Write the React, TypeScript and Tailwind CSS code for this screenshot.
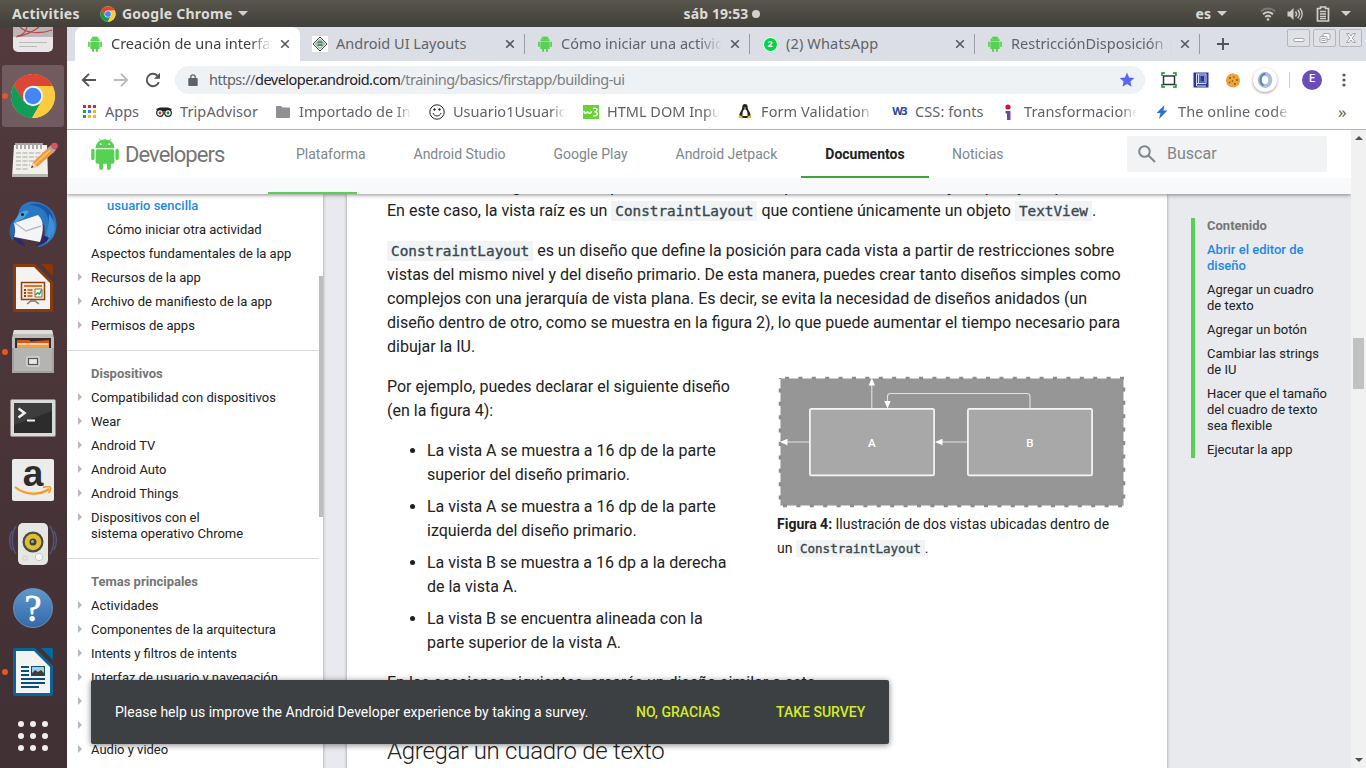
import React from "react";

const UI = "font-['Noto_Sans','Open_Sans',sans-serif]";

function Robot({ className }: { className: string }) {
  return (
    <svg viewBox="0 0 28 32" className={className} fill="#57d053">
      <path d="M4.600 10.200a9.400 9 0 0 1 18.800 0z" />
      <path d="M8.200.6l2 3.400M19.800.6l-2 3.400" stroke="#57d053" strokeWidth="0.9" />
      <rect x="4.600" y="11.200" width="18.800" height="14.600" rx="1.800" />
      <rect x="0.200" y="10.800" width="3.400" height="11.400" rx="1.700" />
      <rect x="24.400" y="10.800" width="3.400" height="11.400" rx="1.700" />
      <rect x="8.200" y="22" width="3.900" height="10" rx="1.900" />
      <rect x="15.900" y="22" width="3.900" height="10" rx="1.900" />
      <circle cx="9.700" cy="6.200" r="0.900" fill="#fff" />
      <circle cx="18.300" cy="6.200" r="0.900" fill="#fff" />
    </svg>
  );
}

function ChromeLogo({ className }: { className: string }) {
  return (
    <svg viewBox="0 0 48 48" className={className}>
      <circle cx="24" cy="24" r="23" fill="#fdcc3e" />
      <path d="M4.100 12.500A23 23 0 0 1 44.300 13.500H24L13.500 29z" fill="#dd4537" />
      <path d="M4.100 12.500A23 23 0 0 0 23 47l10.500-18.500-9.500 4-10-3.500z" fill="#119d58" />
      <path d="M23 47l10-17.500 1-16h10.300A23 23 0 0 1 23 47z" fill="#fdcc3e" />
      <circle cx="24" cy="24" r="10.600" fill="#f4f4f4" />
      <circle cx="24" cy="24" r="8.600" fill="#4486f5" />
    </svg>
  );
}

function CloseX() {
  return (
    <svg viewBox="0 0 16 16" className="size-4 shrink-0" stroke="#55595e" strokeWidth="1.600">
      <path d="M4.200 4.200l7.600 7.600M11.800 4.200l-7.600 7.600" />
    </svg>
  );
}

function Caret() {
  return <svg viewBox="0 0 10 5" className="h-[5px] w-[10px]" fill="#d2d0cb"><path d="M0 0h10L5 5z" /></svg>;
}

/* ---------- GNOME top bar ---------- */
function TopBar() {
  return (
    <div className={`grid h-[27px] shrink-0 grid-cols-3 items-center bg-linear-to-b from-[#59564d] to-[#403f39] text-[14px] font-bold text-[#dedbd5] ${UI}`}>
      <div className="flex items-center pl-3">
        <span className="w-[88px] tracking-[0.28px]">Activities</span>
        <ChromeLogo className="size-4" />
        <span className="ml-1.5 w-[116px] whitespace-nowrap tracking-[0.23px]">Google Chrome</span>
        <Caret />
      </div>
      <div className="flex items-center justify-center gap-1 pl-[78px]">
        <span className="tracking-[0.1px]">sáb 19:53</span>
        <span className="size-2 rounded-full bg-[#d2d0cb]" />
      </div>
      <div className="flex items-center justify-end pr-[15px]">
        <span className="mr-1.5">es</span>
        <Caret />
        <svg viewBox="0 0 16 16" className="ml-[33px] size-4" fill="none" stroke="#cfcdc8" strokeWidth="1.900">
          <path d="M1 5.300C5 1.500 11 1.500 15 5.300" stroke="#7b7973" />
          <path d="M3 8.300C6 5.500 10 5.500 13 8.300" />
          <path d="M5.300 11C7 9.500 9 9.500 10.700 11" />
          <circle cx="8" cy="13.500" r="1.300" fill="#cfcdc8" stroke="none" />
        </svg>
        <svg viewBox="0 0 16 16" className="ml-[11px] size-4" fill="none" stroke="#cfcdc8" strokeWidth="1.300">
          <path d="M.5 5.500h2.500L6.500 2v12L3 10.500H.5z" fill="#cfcdc8" stroke="none" />
          <path d="M8.500 5.500c1.300 1.500 1.300 3.500 0 5M10.700 3.800c2.200 2.500 2.200 5.900 0 8.400M12.800 2.200c3.200 3.400 3.200 8.200 0 11.600" />
        </svg>
        <svg viewBox="0 0 14 16" className="ml-[13px] h-4 w-[14px]" fill="none" stroke="#d2d0cb">
          <path d="M4.500 2.500V1h5v1.500H12.500v12.500h-11V2.500z" strokeWidth="1.700" />
          <path d="M4 5.500h6M4 8h6M4 10.500h6M4 12.700h6" strokeWidth="1.300" />
        </svg>
        <span className="ml-[11px]"><Caret /></span>
      </div>
    </div>
  );
}

/* ---------- Dock ---------- */
function Slot({ children, running, active }: { children: React.ReactNode; running?: boolean; active?: boolean }) {
  return (
    <div className="relative flex h-16 shrink-0 items-center justify-center pr-px">
      {active && <div className="absolute inset-y-px left-0.5 w-[62px] rounded-[3px] bg-white/18" />}
      {running && <div className="absolute left-0.5 top-[29px] size-[6px] rounded-full bg-[#e95420]" />}
      <div className="relative">{children}</div>
    </div>
  );
}

function Dock() {
  return (
    <div className="flex w-[67px] shrink-0 flex-col overflow-hidden bg-linear-to-b from-[#523a3d] via-[#4a3539] to-[#403033]">
      <div className="flex h-[37px] shrink-0 justify-center pr-px">
        <svg viewBox="0 0 42 26" className="h-[26px] w-[42px]">
          <path d="M1 0h40v20a5 5 0 0 1-5 5H6a5 5 0 0 1-5-5z" fill="#e8e6e6" />
          <path d="M1 0h40v10H1z" fill="#bcb6b7" />
          <path d="M4 10C14 8 22 4 27 0M8 0c5 5 18 8 32 3M15 0c-1 5-5 9-10 9" fill="none" stroke="#b9474b" strokeWidth="1.200" />
          <path d="M7 15.500h28M7 19.500h18" stroke="#bdbaba" />
        </svg>
      </div>
      <Slot running active><ChromeLogo className="size-[46px]" /></Slot>
      <Slot>
        <svg viewBox="0 0 46 38" className="ml-1 h-[38px] w-[46px]">
          <path d="M2 4h33l1 32H0z" fill="#f1f0ea" />
          <path d="M0 33h36v3H0z" fill="#b8b7b0" />
          <path d="M5 2v6M9 2v6M13 2v6M17 2v6M21 2v6M25 2v6M29 2v6" stroke="#fff" strokeWidth="3" />
          <path d="M5 2v6M9 2v6M13 2v6M17 2v6M21 2v6M25 2v6M29 2v6" stroke="#5a5753" strokeWidth="1" />
          <path d="M4 12h27M4 16h22M4 20h20M4 24h14M4 28h12" stroke="#aaa9a4" strokeDasharray="5 1.500" />
          <path d="M19 27l2-6L37 6l5 5-17 15z" fill="#f19a36" />
          <path d="M23 23L39 8.500" stroke="#fbc67d" strokeWidth="1.500" />
          <path d="M19 27l2-6 4 5z" fill="#f4d7a6" /><path d="M19 27l1-2.500 1.500 1.500z" fill="#222" />
          <path d="M36 7l3-3 5 5-3 3z" fill="#a9a9ae" />
          <circle cx="42.500" cy="5" r="3.300" fill="#e05359" />
        </svg>
      </Slot>
      <Slot>
        <svg viewBox="0 0 48 48" className="size-12">
          <path d="M17 3C24-1 38 3 44 12c5 9 5 20-2 28-4 4-9 7-14 7 7-5 9-12 7-22-8-6-15-6-26-4C9 12 10 6 17 3z" fill="#2b77c0" />
          <path d="M20 5c10 0 17 5 19 13 2 10-2 18-6 25 8-6 13-18 11-26C42 8 31 1 20 5z" fill="#1c56a4" />
          <path d="M40 14c7 8 7 18 2 26l2-8-6 12 1-9-7 11c6-11 8-20 8-32z" fill="#3b90d6" />
          <path d="M9 17C0 22-2 33 4 41c1-4 1-7 3-10z" fill="#2866ac" />
          <path d="M4 36c1 5 6 9 13 10L8 34z" fill="#31286f" />
          <path d="M34 35c-1 6-4 9-8 11 6 0 12-4 14-8z" fill="#2c2570" />
          <path d="M5 23l24-8c6 5 6 16 2 27L5 37c2-6 1-9 0-14z" fill="#f3f4f7" />
          <path d="M6 23l11 8 15-5" fill="none" stroke="#b8bcc6" strokeWidth="1.500" />
          <path d="M8 17c2-4 7-8 12-6l-5 7-11 6z" fill="#4ba2e0" />
          <circle cx="13.500" cy="14.500" r="1.500" fill="#222" />
        </svg>
      </Slot>
      <Slot>
        <svg viewBox="0 0 40 48" className="h-12 w-10">
          <path d="M0 2a2 2 0 0 1 2-2h20l18 18v28a2 2 0 0 1-2 2H2a2 2 0 0 1-2-2z" fill="#8c3a0b" />
          <path d="M28 0h10a2 2 0 0 1 2 2v10z" fill="#8f3604" />
          <path d="M3 3h18l16 16v26H3z" fill="#f3f3f1" />
          <rect x="8.500" y="18.500" width="23" height="17" fill="#fde8d8" stroke="#97400f" strokeWidth="1.500" />
          <path d="M11 22h18M14.500 26h5M14.500 29h5M14.500 32h5" stroke="#d2763a" strokeWidth="2" />
          <path d="M11 26h2M11 29h2M11 32h2" stroke="#97400f" strokeWidth="2" />
          <path d="M22 25h7v8h-7z" fill="#fff" stroke="#5a7b4f" /><path d="M22.500 31l2-2 2 1 2-4" stroke="#3c9d40" strokeWidth="1.500" fill="none" />
          <path d="M14 40l4-3h4l4 3" fill="none" stroke="#777" strokeWidth="1.500" />
        </svg>
      </Slot>
      <Slot running>
        <svg viewBox="0 0 42 44" className="h-11 w-[42px]">
          <path d="M2 0h38l2 8v34H0V8z" fill="#bdbdbb" />
          <path d="M2 0h38l1 4H1z" fill="#dcdcda" />
          <path d="M3 8h36v10H3z" fill="#332c2a" />
          <path d="M5 10h12l2 1.500 18-1.500V18H5z" fill="#d9531e" />
          <path d="M5 13h32v5H5z" fill="#f0a044" /><path d="M6 14h30" stroke="#fbe5b3" strokeWidth="1.500" />
          <path d="M0 18h42v25H0z" fill="#a2a2a0" /><path d="M2 18h38v23H2z" fill="#b4b4b2" />
          <rect x="14" y="26" width="14" height="11" rx="2.500" fill="#cfcfcd" />
          <rect x="16.500" y="28.500" width="9" height="6" fill="#e8e8e6" stroke="#555" strokeWidth="1.200" />
        </svg>
      </Slot>
      <Slot>
        <svg viewBox="0 0 46 38" className="mt-1 h-[38px] w-[46px]">
          <rect x="0.500" y="0.500" width="45" height="37" rx="1.500" fill="#dadad8" stroke="#8e8b89" />
          <rect x="4" y="4" width="38" height="30" fill="#2c2c2c" />
          <path d="M4 4h38v8L4 26z" fill="#3d3d3d" />
          <path d="M8.500 9.500l6 4.500-6 4.500" fill="none" stroke="#f0f0f0" strokeWidth="2.600" />
          <path d="M17 21.500h8" stroke="#f0f0f0" strokeWidth="2" />
        </svg>
      </Slot>
      <Slot>
        <div className="flex size-[42px] flex-col items-center rounded-[2px] bg-[#ececec]">
          <span className="h-[27px] font-['Liberation_Sans',sans-serif] text-[37px] leading-[29px] font-bold text-[#2d2d2d]">a</span>
          <svg viewBox="0 0 42 12" className="h-3 w-[42px]" fill="none" stroke="#f79a1f" strokeWidth="2.200">
            <path d="M3 1c10 8 24 9 34 2" /><path d="M31 1.500c3-1 6-1.500 7-.5s0 4-1.500 6" strokeWidth="1.700" />
          </svg>
        </div>
      </Slot>
      <Slot>
        <svg viewBox="0 0 48 44" className="h-11 w-12">
          <path d="M7 4c-5 8-5 20 0 28M41 4c5 8 5 20 0 28M3 9c-3 6-3 13 0 19M45 9c3 6 3 13 0 19" fill="none" stroke="#4f5478" strokeWidth="1.500" />
          <rect x="9" y="1" width="30" height="42" rx="5" fill="#e6e6e2" />
          <circle cx="24" cy="20" r="10.500" fill="#4b4b4a" />
          <circle cx="24" cy="20" r="8.300" fill="#dfc02c" />
          <circle cx="24" cy="20" r="3.500" fill="#3f3f3f" /><circle cx="23.500" cy="19.500" r="1.500" fill="#aaa" />
          <circle cx="30" cy="35" r="3.700" fill="#f9f9f7" stroke="#c9c9c6" />
          <path d="M14 34h4v4h-4z" fill="none" stroke="#d2d2ce" />
        </svg>
      </Slot>
      <Slot>
        <div className="flex size-10 items-center justify-center rounded-full border border-[#6b8fb8] bg-linear-to-b from-[#5f97ce] to-[#336aa9]">
          <span className="font-['Liberation_Serif',serif] text-[38px] leading-10 text-white [-webkit-text-stroke:0.8px_white]">?</span>
        </div>
      </Slot>
      <Slot running>
        <svg viewBox="0 0 40 48" className="h-12 w-10">
          <path d="M0 2a2 2 0 0 1 2-2h20l18 18v28a2 2 0 0 1-2 2H2a2 2 0 0 1-2-2z" fill="#0c639c" />
          <path d="M28 0h10a2 2 0 0 1 2 2v10z" fill="#0369a3" />
          <path d="M3 3h18l16 16v26H3z" fill="#f3f3f1" />
          <path d="M8 19h8M8 23h8M8 27h8M8 31h24M8 35h24M8 39h18" stroke="#0b4f79" strokeWidth="2" />
          <rect x="18.500" y="18.500" width="13" height="9" fill="#9fd0f2" stroke="#0b4f79" />
          <path d="M19 27v-2l3-3 3 2 3-2 3 3v2z" fill="#3d3d3d" /><circle cx="29.500" cy="20.500" r="1.500" fill="#f5c33b" />
        </svg>
      </Slot>
      <Slot>
        <svg viewBox="0 0 30 30" className="size-[30px]" fill="#f0eeee">
          {[3, 15, 27].map((y) => [3, 15, 27].map((x) => <circle key={`${x}-${y}`} cx={x} cy={y} r="3" />))}
        </svg>
      </Slot>
    </div>
  );
}

/* ---------- Browser chrome ---------- */
const FADE = "mask-r-from-86% mask-r-to-100%";

function Tab({ icon, title, fade, active, tracking = "" }: { icon: React.ReactNode; title: string; fade?: boolean; active?: boolean; tracking?: string }) {
  return (
    <div className={`relative flex h-[34px] w-[225px] shrink-0 items-center pl-3 ${active ? "rounded-t-[8px] bg-white text-[#3c4043]" : "text-[#5f6368]"}`}>
      <span className="mr-2 flex w-4 shrink-0 justify-center">{icon}</span>
      <span className={`w-[161px] shrink-0 overflow-hidden whitespace-nowrap text-[14.500px] ${tracking} ${fade ? FADE : ""}`}>{title}</span>
      <span className="ml-[5px]"><CloseX /></span>
      {!active && <span className="absolute right-0 top-[7px] h-5 w-px bg-[#9a9da3]" />}
    </div>
  );
}

function WindowButton({ children }: { children: React.ReactNode }) {
  return (
    <div className="flex h-[18px] w-[23px] items-center justify-center rounded-[2px] border border-[#b4b6ba] bg-[#dfe1e6]">
      <svg viewBox="0 0 14 12" className="h-3 w-[14px]" fill="#fff" stroke="#a1a3a8">{children}</svg>
    </div>
  );
}

function TabStrip() {
  return (
    <div className="flex h-[34px] shrink-0 bg-[#dcdee6] pl-2">
      <Tab active fade icon={<Robot className="h-4 w-4" />} title="Creación de una interfaz de usuario" />
      <Tab icon={
        <svg viewBox="0 0 16 16" className="size-4"><path d="M0 0h16v16H0z" fill="#fff" /><path d="M8 1l7 7-7 7-7-7z" fill="#e8eee8" stroke="#444" /><path d="M8 3.500L12.500 8 8 12.500 3.500 8z" fill="none" stroke="#555" strokeWidth=".7" /><path d="M5 7.500a3 2.500 0 0 1 6 0zM5.500 8h5v2h-5z" fill="#4b8f6e" /></svg>
      } title="Android UI Layouts" />
      <Tab fade icon={<Robot className="h-4 w-4" />} title="Cómo iniciar una actividad nueva" />
      <Tab tracking="tracking-[0.15px]" icon={
        <span className="flex size-[15px] items-center justify-center rounded-full border border-white bg-[#07d34a] text-[9px] font-bold tracking-normal text-white">2</span>
      } title="(2) WhatsApp" />
      <Tab fade icon={<Robot className="h-4 w-4" />} title="RestricciónDisposición | Android" />
      <svg viewBox="0 0 12 12" className="ml-[17px] mt-[11px] size-3" stroke="#50545a" strokeWidth="1.900"><path d="M6 0v12M0 6h12" /></svg>
      <div className="ml-[58px] mt-[2px] flex gap-[3px]">
        <WindowButton><rect x="2" y="6.500" width="10" height="3" rx="1" /></WindowButton>
        <WindowButton><rect x="5" y="1.500" width="7" height="6" rx="1" /><rect x="2" y="4.500" width="7" height="6" rx="1" /><rect x="4" y="6.500" width="3" height="2" /></WindowButton>
        <WindowButton><path d="M2.500 1.500h2.500L7 4l2-2.500h2.500L8.300 6l3.200 4.500H9L7 8l-2 2.500H2.500L5.700 6z" /></WindowButton>
      </div>
    </div>
  );
}

function Toolbar() {
  return (
    <div className="flex h-[37px] shrink-0 items-center bg-white pl-[14px]">
      <svg viewBox="0 0 16 16" className="size-4" fill="none" stroke="#50545a" strokeWidth="1.900"><path d="M15 8H2M8 1.800L1.800 8 8 14.200" /></svg>
      <svg viewBox="0 0 16 16" className="ml-4 size-4" fill="none" stroke="#b9bbbe" strokeWidth="1.900"><path d="M1 8h13M8 1.800L14.200 8 8 14.200" /></svg>
      <svg viewBox="0 0 16 16" className="ml-4 size-4" fill="none" stroke="#50545a" strokeWidth="1.900"><path d="M13.800 10.200A6.200 6.200 0 1 1 12.400 3.600" /><path d="M15 .8v6H9z" fill="#50545a" stroke="none" /></svg>
      <div className="ml-[14px] flex h-7 w-[970px] items-center rounded-full bg-[#eff2f4] pl-[13px]">
        <svg viewBox="0 0 10 12" className="h-3 w-[10px]" fill="#5f6368"><path d="M1.200 4h7.600a.9.900 0 0 1 .9.900v6.200a.9.900 0 0 1-.9.900H1.200a.9.900 0 0 1-.9-.9V4.900A.9.900 0 0 1 1.200 4z" /><path d="M2.800 5V3a2.200 2.200 0 0 1 4.400 0v2" fill="none" stroke="#5f6368" strokeWidth="1.300" /></svg>
        <span className="ml-[11px] w-[910px] whitespace-nowrap text-[14.500px] tracking-[-0.5px] text-[#7b7f84]"><span className="text-[#5f6368]">https://</span><span className="text-[#1f2124]">developer.android.com</span>/training/basics/firstapp/building-ui</span>
        <svg viewBox="0 0 16 16" className="size-4 shrink-0" fill="#5966f1"><path d="M8 .6l2.100 4.900 5.300.5-4 3.500 1.200 5.200L8 12l-4.600 2.700 1.200-5.200-4-3.500 5.300-.5z" /></svg>
      </div>
      <svg viewBox="0 0 16 16" className="ml-4 size-4" fill="none"><path d="M1 4V1h3M12 1h3v3M15 12v3h-3M4 15H1v-3" stroke="#11932c" strokeWidth="1.500" /><rect x="2.500" y="4" width="11" height="8.500" stroke="#333" strokeWidth="1.500" /></svg>
      <svg viewBox="0 0 16 16" className="ml-4 size-4"><rect x=".5" y=".5" width="15" height="15" fill="#26379c" /><path d="M3.500 2v12M3 2h10v9.500H3M5.500 2v9M4 14h9" stroke="#dfe3f5" fill="none" /><rect x="7" y="3.500" width="4.500" height="6.500" fill="#26379c" stroke="#aab3e0" strokeWidth=".7" /></svg>
      <svg viewBox="0 0 16 16" className="ml-4 size-4"><path d="M8 1c1 1.500 3 1 4 1.500 1.500 1 3 4 3 6A7 6.800 0 0 1 1 9c0-3 1-5 3-6.500C5.500 1.500 7 2 8 1z" fill="#e9a53c" /><g fill="#8a4a17"><circle cx="5" cy="6" r=".9" /><circle cx="9" cy="5" r=".8" /><circle cx="12" cy="8" r=".9" /><circle cx="7.500" cy="9" r=".8" /><circle cx="4.500" cy="10.500" r=".8" /><circle cx="10" cy="12" r=".9" /></g></svg>
      <div className="ml-[12px] flex size-6 items-center justify-center rounded-full bg-white shadow-[0_1px_3px_rgba(0,0,0,0.4)]">
        <svg viewBox="0 0 16 16" className="size-4" fill="none"><ellipse cx="8" cy="8" rx="5.300" ry="6" stroke="#a9bfda" strokeWidth="4" /><path d="M8.500 1.500a6 6.500 0 0 0-2 12" stroke="#6588b6" strokeWidth="2.200" /></svg>
      </div>
      <div className="ml-3 h-4 w-px bg-[#cdd0d4]" />
      <div className="ml-3 flex size-5 items-center justify-center rounded-full bg-[#6a4dbb] font-[Roboto,sans-serif] text-[11px] font-medium text-white">E</div>
      <svg viewBox="0 0 4 16" className="ml-5 h-4 w-1" fill="#54585d"><circle cx="2" cy="3" r="1.600" /><circle cx="2" cy="8" r="1.600" /><circle cx="2" cy="13" r="1.600" /></svg>
    </div>
  );
}

function Mark({ icon, text, width, fade, tracking }: { icon: React.ReactNode; text: string; width: string; fade?: boolean; tracking: string }) {
  return (
    <div className={`flex shrink-0 items-center ${width}`}>
      <span className="mr-2 flex w-4 shrink-0 justify-center">{icon}</span>
      <span className={`overflow-hidden whitespace-nowrap text-[14.500px] ${tracking} ${fade ? `w-[113px] ${FADE}` : ""}`}>{text}</span>
    </div>
  );
}

function Bookmarks() {
  return (
    <div className="flex h-8 shrink-0 items-center border-b border-[#b3b4b6] bg-white pb-1 pl-[14px] text-[#5f6368]">
      <Mark width="w-[75px]" tracking="" text="Apps" icon={
        <svg viewBox="0 0 13 13" className="size-[13px]"><path d="M0 0h3v3H0zM5 0h3v3H5zM10 0h3v3h-3z" fill="#e3203b" /><path d="M0 5h3v3H0zM0 10h3v3H0z" fill="#1f9d55" /><path d="M5 5h3v3H5z" fill="#3f7ff0" /><path d="M10 5h3v3h-3zM5 10h3v3H5zM10 10h3v3h-3z" fill="#f4b41c" /></svg>
      } />
      <Mark width="w-[119px]" tracking="tracking-[0.1px]" text="TripAdvisor" icon={
        <svg viewBox="0 0 16 10" className="h-[10px] w-4"><path d="M0 2l4-1.500h8L16 2l-2 2H2z" fill="#222" /><circle cx="4" cy="6" r="3.300" fill="#fff" stroke="#222" strokeWidth="1.200" /><circle cx="12" cy="6" r="3.300" fill="#fff" stroke="#222" strokeWidth="1.200" /><circle cx="4" cy="6" r="1.400" fill="#c33" /><circle cx="12" cy="6" r="1.400" fill="#17814c" /></svg>
      } />
      <Mark width="w-[154px]" tracking="" fade text="Importado de Internet Explorer" icon={
        <svg viewBox="0 0 14 12" className="h-3 w-[14px]" fill="#8f9094"><path d="M0 1a1 1 0 0 1 1-1h4l1.500 1.500H13a1 1 0 0 1 1 1V11a1 1 0 0 1-1 1H1a1 1 0 0 1-1-1z" /></svg>
      } />
      <Mark width="w-[154px]" tracking="" fade text="Usuario1Usuario2Usuario" icon={
        <svg viewBox="0 0 16 16" className="size-4" fill="none" stroke="#222"><circle cx="8" cy="8" r="7.200" /><path d="M4 9c1.500 4 6.500 4 8 0" /><circle cx="5.500" cy="5.500" r=".8" fill="#222" /><circle cx="10.500" cy="5.500" r=".8" fill="#222" /></svg>
      } />
      <Mark width="w-[154px]" tracking="" fade text="HTML DOM Input Text" icon={
        <svg viewBox="0 0 16 14" className="h-[14px] w-4"><path d="M0 0h16v14H0z" fill="#69d237" /><path d="M1 6c0 3 3 3 3.500 0 0 3 3.500 3 4 0M10 3.500c5-1.500 5 3 1.500 3.200 4 0 4 5-1.500 4" stroke="#fff" strokeWidth="1.400" fill="none" /></svg>
      } />
      <Mark width="w-[154px]" tracking="tracking-[0.1px]" fade text="Form Validation JS" icon={
        <svg viewBox="0 0 14 15" className="h-[15px] w-[14px]"><path d="M7 0c3 0 2.500 3 3 5s3 4 2.500 7l-3 2h-5l-3-2C1 9 3.500 7 4 5s0-5 3-5z" fill="#222" /><path d="M7 5c2 1 3 4 2.500 7h-5C4 9 5 6 7 5z" fill="#fff" /><path d="M1 11l3 1 1 2.500-4.500-.8zM13 11l-3 1-1 2.500 4.500-.8zM5.500 3.500h3L7 5z" fill="#f2b41b" /></svg>
      } />
      <Mark width="w-[109px]" tracking="tracking-[0.1px]" text="CSS: fonts" icon={<span className="font-['Open_Sans',sans-serif] text-[11px] font-bold tracking-[-1.6px] text-[#20479c]">W3</span>} />
      <Mark width="w-[154px]" tracking="tracking-[0.1px]" fade text="Transformaciones CSS" icon={
        <svg viewBox="0 0 8 16" className="h-4 w-2"><circle cx="4" cy="3" r="2.600" fill="#d01532" /><path d="M1.500 7h5v9H3V9.500H1.500z" fill="#6b4a95" /></svg>
      } />
      <Mark width="w-[184px]" tracking="tracking-[0.1px]" fade text="The online code editor" icon={
        <svg viewBox="0 0 12 14" className="h-[14px] w-3" fill="#2b6fdc"><path d="M8.500 0L.5 8h4L3 14l8.500-8.500h-4z" /></svg>
      } />
      <span className="text-[17px] leading-4">»</span>
    </div>
  );
}

/* ---------- Page ---------- */
function SideItem({ children, arrow }: { children: React.ReactNode; arrow?: boolean }) {
  return (
    <div className="flex py-1 pl-[11px]">
      <svg viewBox="0 0 4 8" className="mr-[9px] mt-[3px] h-2 w-1 shrink-0" fill={arrow ? "#b5b8bd" : "none"}><path d="M0 0l4 4-4 4z" /></svg>
      <span className="whitespace-nowrap">{children}</span>
    </div>
  );
}

function SideTitle({ children }: { children: React.ReactNode }) {
  return <div className="py-1 pl-6 font-bold text-[#757575]">{children}</div>;
}

function Sidebar() {
  return (
    <div className="relative w-[256px] shrink-0 bg-white font-[Roboto,sans-serif] text-[13px] leading-4 text-[#212121] shadow-[0_1px_3px_rgba(60,64,67,0.5)]">
      <div className="pl-10 pb-1 pt-1 font-medium text-[#1e88e5]">usuario sencilla</div>
      <div className="py-1 pl-10">Cómo iniciar otra actividad</div>
      <SideItem>Aspectos fundamentales de la app</SideItem>
      <SideItem arrow>Recursos de la app</SideItem>
      <SideItem arrow>Archivo de manifiesto de la app</SideItem>
      <SideItem arrow>Permisos de apps</SideItem>
      <div className="mr-1 mb-[11px] mt-3 h-px bg-[#d8dadd]" />
      <SideTitle>Dispositivos</SideTitle>
      <SideItem arrow>Compatibilidad con dispositivos</SideItem>
      <SideItem arrow>Wear</SideItem>
      <SideItem arrow>Android TV</SideItem>
      <SideItem arrow>Android Auto</SideItem>
      <SideItem arrow>Android Things</SideItem>
      <SideItem arrow>Dispositivos con el<br />sistema operativo Chrome</SideItem>
      <div className="mr-1 mb-[11px] mt-3 h-px bg-[#d8dadd]" />
      <SideTitle>Temas principales</SideTitle>
      <SideItem arrow>Actividades</SideItem>
      <SideItem arrow>Componentes de la arquitectura</SideItem>
      <SideItem arrow>Intents y filtros de intents</SideItem>
      <SideItem arrow>Interfaz de usuario y navegación</SideItem>
      <SideItem arrow>Animaciones</SideItem>
      <SideItem arrow>Imágenes</SideItem>
      <SideItem arrow>Audio y video</SideItem>
      <div className="absolute right-0 top-[82px] h-[241px] w-1 bg-[#bdbdbd]" />
    </div>
  );
}

function Code({ children, small }: { children: React.ReactNode; small?: boolean }) {
  return <code className={`bg-[#f1f3f4] px-1 font-['DejaVu_Sans_Mono',monospace] leading-none text-[#37474f] [-webkit-text-stroke:0.35px_#37474f] ${small ? "py-px text-[12.560px]" : "py-[2px] text-[14.350px]"}`}>{children}</code>;
}

function Figure() {
  return (
    <svg viewBox="0 0 350 134" className="block h-[134px] w-[350px]" fontFamily="Roboto, sans-serif">
      <rect x="3.500" y="3.500" width="343" height="127" fill="#969696" stroke="#c9c9c9" />
      <rect x="3" y="3" width="344" height="128" fill="none" stroke="#8b8b8b" strokeWidth="2.500" strokeDasharray="4 9.400" strokeDashoffset="-5" />
      <g fill="#a8a8a8" stroke="#f6f6f6" strokeWidth="1.700">
        <rect x="32.900" y="33.900" width="124.200" height="66.500" rx="1.500" />
        <rect x="190.900" y="33.900" width="124.200" height="66.500" rx="1.500" />
      </g>
      <g fill="none" stroke="#e2e2e2" strokeWidth="1.100">
        <path d="M94.800 33.500V8M32 67H9M190 67h-28M253 33.500V21.500a3 3 0 0 0-3-3H113.500a3 3 0 0 0-3 3V28" />
      </g>
      <g fill="#fff">
        <path d="M94.800 3l3.200 7.500h-6.400zM3 67l7.500-3.200v6.400zM158 67l7.500-3.200v6.400zM110.500 33.500l-3.200-7.500h6.400z" />
      </g>
      <g fill="#fff" fontSize="11.500" fontWeight="500" textAnchor="middle"><text x="94.800" y="71.500">A</text><text x="252.800" y="71.500">B</text></g>
    </svg>
  );
}

function Article() {
  return (
    <div className="relative ml-6 w-[820px] shrink-0 bg-white px-10 font-[Roboto,sans-serif] text-[16px] leading-6 text-[#212121] shadow-[0_1px_3px_rgba(60,64,67,0.5)]">
      <div className="-mt-[19px] h-6 whitespace-nowrap">La vista inicial se genera así: la plantilla crea un recurso para cada diseño de la jerarquía, y después</div>
      <p className="whitespace-nowrap">En este caso, la vista raíz es un <Code>ConstraintLayout</Code> que contiene únicamente un objeto <Code>TextView</Code>.</p>
      <p className="mt-4 whitespace-nowrap"><Code>ConstraintLayout</Code> es un diseño que define la posición para cada vista a partir de restricciones sobre<br />vistas del mismo nivel y del diseño primario. De esta manera, puedes crear tanto diseños simples como<br />complejos con una jerarquía de vista plana. Es decir, se evita la necesidad de diseños anidados (un<br />diseño dentro de otro, como se muestra en la figura 2), lo que puede aumentar el tiempo necesario para<br />dibujar la IU.</p>
      <div className="mt-4 flex">
        <div className="w-[390px] shrink-0 whitespace-nowrap">
          <p>Por ejemplo, puedes declarar el siguiente diseño<br />(en la figura 4):</p>
          <ul className="mt-4 flex list-disc flex-col gap-2 pl-10">
            <li>La vista A se muestra a 16 dp de la parte<br />superior del diseño primario.</li>
            <li>La vista A se muestra a 16 dp de la parte<br />izquierda del diseño primario.</li>
            <li>La vista B se muestra a 16 dp a la derecha<br />de la vista A.</li>
            <li>La vista B se encuentra alineada con la<br />parte superior de la vista A.</li>
          </ul>
        </div>
        <div className="text-[14px] whitespace-nowrap">
          <Figure />
          <p className="mt-[3px]"><b>Figura 4:</b> Ilustración de dos vistas ubicadas dentro de<br />un <Code small>ConstraintLayout</Code>.</p>
        </div>
      </div>
      <p className="mt-4">En las secciones siguientes, crearás un diseño similar a este.</p>
      <h2 className="mt-10 text-[24px] leading-8 font-light tracking-[-0.26px] whitespace-nowrap">Agregar un cuadro de texto</h2>
    </div>
  );
}

function Contents() {
  return (
    <div className="ml-6 mt-6 flex h-60 w-40 flex-col gap-2 border-l-4 border-[#57d053] pl-3 font-[Roboto,sans-serif] text-[13px] leading-4 whitespace-nowrap text-[#212121]">
      <span className="font-bold text-[#757575]">Contenido</span>
      <span className="font-medium text-[#1e88e5]">Abrir el editor de<br />diseño</span>
      <span>Agregar un cuadro<br />de texto</span>
      <span>Agregar un botón</span>
      <span>Cambiar las strings<br />de IU</span>
      <span>Hacer que el tamaño<br />del cuadro de texto<br />sea flexible</span>
      <span>Ejecutar la app</span>
    </div>
  );
}

function PageHeader() {
  return (
    <div className="relative z-10 shrink-0 font-[Roboto,sans-serif] shadow-[0_1px_4px_rgba(0,0,0,0.45)]">
      <div className="flex h-12 items-center bg-white text-[14px] text-[#80868b]">
        <Robot className="ml-6 h-8 w-[28px]" />
        <span className="ml-1.5 w-[171px] text-[22px] tracking-[-0.95px] text-[#757575]">Developers</span>
        <span className="w-[117.500px]">Plataforma</span>
        <span className="w-[140px]">Android Studio</span>
        <span className="w-[122px]">Google Play</span>
        <span className="w-[125.500px]">Android Jetpack</span>
        <span className="flex h-12 w-32 items-center justify-center border-b-2 border-[#3fa63b] pt-0.5 font-bold text-[#212121]">Documentos</span>
        <span className="ml-[23px] w-[175px]">Noticias</span>
        <div className="flex h-9 w-[200px] items-center rounded-[2px] bg-[#f1f3f4] pl-[11px] text-[16px]">
          <svg viewBox="0 0 18 18" className="mr-[11px] size-[18px]" fill="none" stroke="#80868b" strokeWidth="2"><circle cx="6.500" cy="6.500" r="5.300" /><path d="M10.500 10.500l6.500 6.500" /></svg>
          Buscar
        </div>
      </div>
      <div className="flex h-4 items-end bg-[#f8f9fb] pl-[201px]"><div className="h-0.5 w-[89px] bg-[#57d053]" /></div>
    </div>
  );
}

function Scrollbar() {
  return (
    <div className="flex w-[15px] shrink-0 flex-col items-center bg-[#f1f1f1]">
      <svg viewBox="0 0 8 4" className="mt-[6px] h-1 w-2" fill="#505050"><path d="M0 4l4-4 4 4z" /></svg>
      <div className="mt-[198px] h-[51px] w-[11px] bg-[#c1c1c1]" />
      <svg viewBox="0 0 8 4" className="mt-auto mb-[6px] h-1 w-2" fill="#505050"><path d="M0 0l4 4 4-4z" /></svg>
    </div>
  );
}

export default function App() {
  return (
    <div className="relative flex h-[768px] w-[1366px] flex-col overflow-hidden">
      <TopBar />
      <div className="flex min-h-0 flex-1">
        <Dock />
        <div className={`flex min-w-0 flex-1 flex-col ${UI}`}>
          <TabStrip />
          <Toolbar />
          <Bookmarks />
          <div className="flex min-h-0 flex-1">
            <div className="flex min-w-0 flex-1 flex-col overflow-hidden bg-[#e8eaed]">
              <PageHeader />
              <div className="flex min-h-0 flex-1">
                <Sidebar />
                <Article />
                <Contents />
              </div>
            </div>
            <Scrollbar />
          </div>
        </div>
      </div>
      <div className="absolute left-[91px] top-[680px] z-20 flex h-16 w-[798px] items-center rounded-[2px] bg-[#3c4043] pl-6 font-[Roboto,sans-serif] text-[14px] text-white shadow-[0_1px_6px_rgba(0,0,0,0.5)]">
        <span className="w-[521px]">Please help us improve the Android Developer experience by taking a survey.</span>
        <span className="w-[140px] font-medium text-[#d3ec29]">NO, GRACIAS</span>
        <span className="font-medium text-[#d3ec29]">TAKE SURVEY</span>
      </div>
    </div>
  );
}
